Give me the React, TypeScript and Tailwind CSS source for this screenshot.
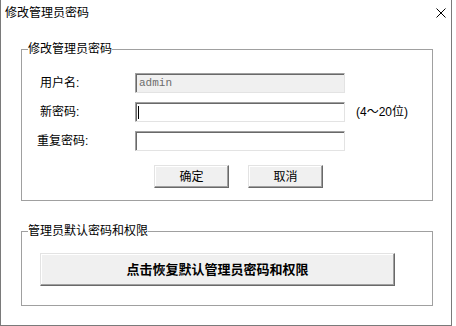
import React from 'react';

const font = '"Liberation Sans", "Noto Sans CJK SC", sans-serif';

const sunken =
  'h-[20px] w-[210px] border border-t-[#a0a0a0] border-l-[#a0a0a0] border-r-[#e3e3e3] border-b-[#e3e3e3] shadow-[inset_1px_1px_0_#696969] flex items-center';

const raised =
  'bg-[#f0f0f0] border border-t-[#e3e3e3] border-l-[#e3e3e3] border-r-[#696969] border-b-[#696969] shadow-[inset_-1px_-1px_0_#a0a0a0,inset_1px_1px_0_#ffffff] flex items-center justify-center text-black';

function Field({ label, children, shift }: { label: string; children: React.ReactNode; shift?: boolean }) {
  return (
    <div className="flex items-center h-[20px]">
      <span className="w-[95px] shrink-0 text-[12px] leading-none">
        <span className={shift ? 'inline-block -ml-[3px]' : 'inline-block'}>{label}</span>
      </span>
      {children}
    </div>
  );
}

export default function App() {
  return (
    <div className="w-[456px] h-[326px] bg-white" style={{ fontFamily: font }}>
      <div className="w-[452px] h-[326px] border-l border-r border-b border-[#7a7a7a] flex flex-col">
        {/* title bar */}
        <div className="h-[26px] flex items-center justify-between pl-[4px] pr-[5px]">
          <span className="text-[12px] leading-none text-black">修改管理员密码</span>
          <svg width="10" height="10" viewBox="0 0 10 10" className="block">
            <path d="M0.5 0.5 L9.5 9.5 M9.5 0.5 L0.5 9.5" stroke="#000" strokeWidth="1" fill="none" />
          </svg>
        </div>

        <div className="pl-[20px] pt-[16px] flex flex-col">
          <fieldset className="w-[412px] border border-[#a0a0a0]">
            <legend className="ml-[6px] text-[12px] leading-[15px] text-black">修改管理员密码</legend>
            <div className="pl-[18px] pt-[16px] pb-[12px] flex flex-col gap-[9px]">
              <Field label="用户名:">
                <div className={`${sunken} bg-[#f0f0f0]`}>
                  <span className="pl-[3px] text-[11px] leading-none text-[#6d6d6d]" style={{ fontFamily: '"Liberation Mono", monospace' }}>
                    admin
                  </span>
                </div>
              </Field>
              <Field label="新密码:">
                <div className={`${sunken} bg-white`}>
                  <span className="ml-[2px] w-px h-[13px] bg-black" />
                </div>
                <span className="ml-[11px] text-[12px] leading-none">(4～20位)</span>
              </Field>
              <Field label="重复密码:" shift>
                <div className={`${sunken} bg-white`} />
              </Field>
              <div className="flex gap-[19px] pl-[114px] mt-[5px]">
                <button className={`${raised} w-[75px] h-[23px] text-[12px]`}>确定</button>
                <button className={`${raised} w-[75px] h-[23px] text-[12px]`}>取消</button>
              </div>
            </div>
          </fieldset>

          <fieldset className="w-[412px] mt-[23px] border border-[#a0a0a0]">
            <legend className="ml-[6px] text-[12px] leading-[15px] text-black">管理员默认密码和权限</legend>
            <div className="pl-[18px] pt-[14px] pb-[19px]">
              <button className={`${raised} w-[355px] h-[33px] text-[13px] font-bold`}>点击恢复默认管理员密码和权限</button>
            </div>
          </fieldset>
        </div>
      </div>
    </div>
  );
}
